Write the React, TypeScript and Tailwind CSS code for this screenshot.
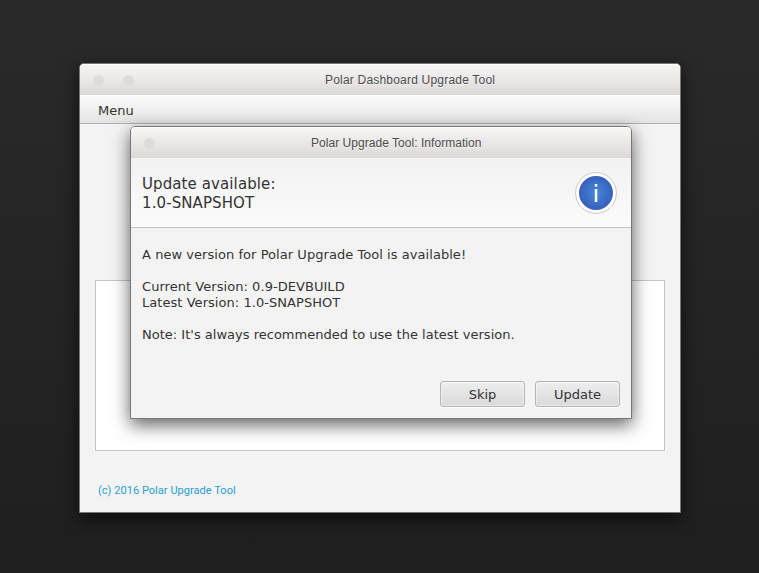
import React from "react";

function TitleBar({ title, dots, textClass }: { title: string; dots: number; textClass: string }) {
  return (
    <div className="flex h-[31px] shrink-0 items-center rounded-t-[4px] border-t border-white bg-linear-to-b from-[#f8f6f5] to-[#dcd8d7] pl-[13px]">
      <div className="flex gap-[19px]">
        {Array.from({ length: dots }, (_, i) => (
          <span key={i} className="size-[11px] rounded-full bg-[#dddcda]" />
        ))}
      </div>
      <span
        className={`font-['Liberation_Sans',sans-serif] text-[12px] leading-4 whitespace-nowrap text-[#4c4c4c] [text-shadow:0_1px_0_rgba(255,255,255,0.6)] ${textClass}`}
      >
        {title}
      </span>
    </div>
  );
}

function InfoIcon() {
  return (
    <svg width="42" height="42" viewBox="0 0 42 42" className="shrink-0">
      <defs>
        <radialGradient id="blue">
          <stop offset="0" stopColor="#4688da" />
          <stop offset="1" stopColor="#3660bb" />
        </radialGradient>
      </defs>
      <circle cx="21" cy="21" r="20.4" fill="#fff" stroke="#c9c9c9" />
      <circle cx="21" cy="21" r="17" fill="url(#blue)" />
      <rect x="19.8" y="12" width="2.5" height="2.6" fill="#fff" />
      <rect x="19.8" y="17" width="2.5" height="13" fill="#fff" />
    </svg>
  );
}

function Button({ label }: { label: string }) {
  return (
    <button className="h-[26px] w-[85px] rounded-[3px] border border-[#b4b4b4] bg-linear-to-b from-[#eeeeee] to-[#d9d9d9] pt-[2px] text-[13px] leading-[22px] shadow-[inset_0_0_0_1px_rgba(255,255,255,0.45),0_1px_0_#fff]">
      {label}
    </button>
  );
}

function Dialog() {
  return (
    <div className="absolute top-[62px] left-[50px] flex h-[293px] w-[502px] flex-col rounded-t-[5px] border border-[#777] bg-[#f3f3f3] shadow-[0_6px_18px_0_rgba(0,0,0,0.62)]">
      <TitleBar title="Polar Upgrade Tool: Information" dots={1} textClass="ml-[156px] tracking-[0.04px]" />
      <div className="flex h-[70px] shrink-0 items-start justify-between border-b border-[#c3c3c3] bg-linear-to-b from-[#f2f2f2] to-[#fbfbfb] pt-[14px] pr-[14px] pl-[11px]">
        <div className="pt-[3px] text-[15px] leading-[19px] tracking-[0.1px]">
          <p>Update available:</p>
          <p>1.0-SNAPSHOT</p>
        </div>
        <InfoIcon />
      </div>
      <div className="flex-1 pt-[19px] pl-[11px] text-[13px] leading-4">
        <p className="tracking-[0.05px]">A new version for Polar Upgrade Tool is available!</p>
        <p className="mt-4 tracking-[0.05px]">Current Version: 0.9-DEVBUILD</p>
        <p className="tracking-[0.05px]">Latest Version: 1.0-SNAPSHOT</p>
        <p className="mt-4 tracking-[0.01px]">Note: It's always recommended to use the latest version.</p>
      </div>
      <div className="flex justify-end gap-2.5 pr-[11px] pb-[11px]">
        <Button label="Skip" />
        <Button label="Update" />
      </div>
    </div>
  );
}

export default function App() {
  return (
    <div className="h-[573px] w-[759px] overflow-hidden bg-linear-to-b from-[#2a2a2a] to-[#1f1f1f] pt-[63px] pl-[79px] font-['DejaVu_Sans',sans-serif] text-[#333]">
      <div className="relative flex h-[450px] w-[602px] flex-col rounded-t-[5px] border border-[#777] bg-[#f3f3f3] shadow-[0_6px_18px_0_rgba(0,0,0,0.62)]">
        <TitleBar title="Polar Dashboard Upgrade Tool" dots={2} textClass="ml-[191px] tracking-[0.2px]" />
        <div className="h-[29px] shrink-0 border-b border-[#b0b0b0] bg-linear-to-b from-[#fdfdfd] to-[#e3e3e3] pt-[8px] pl-[18px] text-[13px] leading-4">
          Menu
        </div>
        <div className="mx-[15px] mt-[156px] h-[171px] shrink-0 border border-[#c5c5c5] bg-white" />
        <p className="mt-[32px] pl-[18px] font-[Roboto,sans-serif] text-[11px] leading-4 tracking-[0.04px] text-[#2a9fd0]">
          (c) 2016 Polar Upgrade Tool
        </p>
        <Dialog />
      </div>
    </div>
  );
}
